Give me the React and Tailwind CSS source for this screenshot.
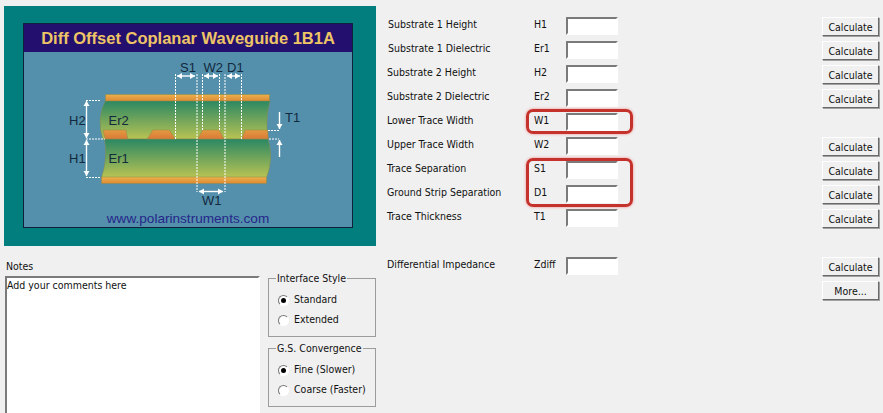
const rows = [
  { label: "Substrate 1 Height", sym: "H1", calc: true, indent: true },
  { label: "Substrate 1 Dielectric", sym: "Er1", calc: true, indent: true },
  { label: "Substrate 2 Height", sym: "H2", calc: true },
  { label: "Substrate 2 Dielectric", sym: "Er2", calc: true },
  { label: "Lower Trace Width", sym: "W1", calc: false },
  { label: "Upper Trace Width", sym: "W2", calc: true },
  { label: "Trace Separation", sym: "S1", calc: true },
  { label: "Ground Strip Separation", sym: "D1", calc: true },
  { label: "Trace Thickness", sym: "T1", calc: true },
];

function Bevel({ children }) {
  return (
    <button className="block h-[19px] w-[57px] border border-t-white border-l-white border-r-[#6a6a6a] border-b-[#6a6a6a] bg-[#f0f0f0] text-center text-[10.5px] leading-[16px] text-[#111] shadow-[1px_1px_0_#a0a0a0]">
      {children}
    </button>
  );
}

function Field() {
  return (
    <input
      type="text"
      className="h-[18px] w-[52px] shrink-0 border-2 border-t-[#7a7a7a] border-l-[#7a7a7a] border-r-white border-b-white bg-white outline-none"
    />
  );
}

function Row({ label, sym, calc, indent }) {
  return (
    <div className="flex h-6 items-start">
      <span className={`${indent ? "ml-px w-[146px]" : "w-[147px]"} pt-px text-[10.5px] leading-[13px]`}>{label}</span>
      <span className="w-[32px] pt-px text-[10.5px] leading-[13px]">{sym}</span>
      <Field />
      <div className="ml-auto">{calc && <Bevel>Calculate</Bevel>}</div>
    </div>
  );
}

function Radio({ label, checked }) {
  return (
    <div className="flex h-5 items-center">
      <span className="flex size-[11px] items-center justify-center rounded-full border border-t-[#777] border-l-[#777] border-r-white border-b-white bg-white">
        {checked && <span className="size-[5px] rounded-full bg-black" />}
      </span>
      <span className="ml-[5px] text-[10.5px]">{label}</span>
    </div>
  );
}

function Group({ title, options }) {
  return (
    <fieldset className="h-[65px] border border-[#9c9c9c] pl-[9px] pt-[5px]">
      <legend className="-ml-[2px] whitespace-nowrap px-px text-[10.5px] leading-[13px]">{title}</legend>
      {options.map((o) => (
        <Radio key={o.label} {...o} />
      ))}
    </fieldset>
  );
}

function Arrow({ x1, y1, x2, y2, both }) {
  // small arrow heads drawn by hand, the diagram is a picture
  const dx = Math.sign(x2 - x1);
  const dy = Math.sign(y2 - y1);
  const head = (x, y, sx, sy) =>
    `${x},${y} ${x - sx * 5 - sy * 3},${y - sy * 5 - sx * 3} ${x - sx * 5 + sy * 3},${y - sy * 5 + sx * 3}`;
  return (
    <g fill="#fff" stroke="none">
      <line x1={x1} y1={y1} x2={x2} y2={y2} stroke="#fff" strokeWidth="1.4" />
      <polygon points={head(x2, y2, dx, dy)} />
      {both && <polygon points={head(x1, y1, -dx, -dy)} />}
    </g>
  );
}

function Dash({ x1, y1, x2, y2 }) {
  return <line x1={x1} y1={y1} x2={x2} y2={y2} stroke="#fff" strokeWidth="1" strokeDasharray="2 1" />;
}

// svg viewBox is in page coordinates so the numbers read off the reference directly
function Diagram() {
  const lab = { fill: "#13293d", fontSize: 13, fontFamily: "'Liberation Sans', sans-serif" };
  const edge = { stroke: "#8a8a4a", strokeWidth: 0.5 };
  return (
    <svg width="328" height="158" viewBox="24 52 328 158" className="block">
      <defs>
        <linearGradient id="green" x1="0" y1="0" x2="0" y2="1">
          <stop offset="0" stopColor="#2a8763" />
          <stop offset="1" stopColor="#b8c353" />
        </linearGradient>
        <linearGradient id="copper" x1="0" y1="0" x2="0" y2="1">
          <stop offset="0" stopColor="#ecb04a" />
          <stop offset="1" stopColor="#dd8a35" />
        </linearGradient>
        <linearGradient id="trace" x1="0" y1="0" x2="0" y2="1">
          <stop offset="0" stopColor="#e49a40" />
          <stop offset="1" stopColor="#d97a38" />
        </linearGradient>
      </defs>
      <path d="M105.5 100.5 Q96 119 103 139 L268 139 Q265 119 270 100.5 Z" fill="url(#green)" {...edge} />
      <path d="M104.5 139 Q108 158 101.5 177.5 L266.5 177.5 Q274 158 268 139 Z" fill="url(#green)" {...edge} />
      <rect x="105.5" y="94.5" width="164" height="6.5" fill="url(#copper)" {...edge} />
      <rect x="101.5" y="177" width="165" height="6.5" fill="url(#copper)" {...edge} />
      <polygon points="103,130 126,130 127.7,139 105,139" fill="url(#trace)" {...edge} />
      <polygon points="147.3,139 152.7,130 169.3,130 175.3,139" fill="url(#trace)" {...edge} />
      <polygon points="197.7,139 202.7,130 219.3,130 224,139" fill="url(#trace)" {...edge} />
      <polygon points="241.7,139 245,130 267.7,130 268.3,139" fill="url(#trace)" {...edge} />

      <Dash x1="175.5" y1="74" x2="175.5" y2="139" />
      <Dash x1="197" y1="74" x2="197" y2="192" />
      <Dash x1="202.5" y1="74" x2="202.5" y2="130" />
      <Dash x1="219.5" y1="74" x2="219.5" y2="130" />
      <Dash x1="225" y1="74" x2="225" y2="192" />
      <Dash x1="241.5" y1="74" x2="241.5" y2="139" />
      <Dash x1="86" y1="100.5" x2="101" y2="100.5" />
      <Dash x1="86" y1="139" x2="105" y2="139" />
      <Dash x1="86" y1="177.5" x2="101" y2="177.5" />
      <Dash x1="268" y1="130.5" x2="279" y2="130.5" />
      <Dash x1="269" y1="139" x2="279" y2="139" />

      <Arrow x1={177} y1={76} x2={195} y2={76} both />
      <Arrow x1={204} y1={76} x2={218} y2={76} both />
      <Arrow x1={227} y1={76} x2={240} y2={76} both />
      <Arrow x1={199} y1={191.5} x2={223} y2={191.5} both />
      <Arrow x1={86.5} y1={101} x2={86.5} y2={138} both />
      <Arrow x1={86.5} y1={140} x2={86.5} y2={176} both />
      <Arrow x1={279.5} y1={112} x2={279.5} y2={129} />
      <Arrow x1={279.5} y1={157} x2={279.5} y2={140} />

      <text x="180" y="72" {...lab}>S1</text>
      <text x="203.5" y="72" {...lab}>W2</text>
      <text x="227" y="72" {...lab}>D1</text>
      <text x="202" y="205" {...lab}>W1</text>
      <text x="69" y="125" {...lab}>H2</text>
      <text x="69" y="163" {...lab}>H1</text>
      <text x="108.5" y="125" {...lab}>Er2</text>
      <text x="108.5" y="163" {...lab}>Er1</text>
      <text x="285" y="122" {...lab}>T1</text>
    </svg>
  );
}

export default function App() {
  return (
    <div className="flex h-[413px] w-[883px] overflow-hidden bg-[#f0f0f0] font-['DejaVu_Sans_Condensed','Liberation_Sans',sans-serif] text-[#111]">
      <div className="w-[387px] shrink-0 pl-1 pt-1.5">
        <div className="h-[240px] w-[372px] bg-[#017e7d] pl-[19px] pt-[17px] font-['Liberation_Sans',sans-serif]">
          <div className="h-[205px] w-[330px] border border-[#10203a] bg-[#5490ac]">
            <div className="flex h-[28px] items-center justify-center bg-[#230f6e] text-[16.5px] font-bold text-[#eec566]">
              Diff Offset Coplanar Waveguide 1B1A
            </div>
            <Diagram />
            <div className="text-center text-[13.6px] leading-[17px] text-[#25268a]">www.polarinstruments.com</div>
          </div>
        </div>
        <div className="flex">
          <div className="w-[264px] shrink-0 pl-px">
            <div className="pl-px pt-[14px] pb-[3px] text-[10.5px] leading-[13px]">Notes</div>
            <div className="h-[150px] w-[255px] border-2 border-t-[#7a7a7a] border-l-[#7a7a7a] border-r-white bg-white pt-px text-[10.5px] leading-[13px]">
              Add your comments here
            </div>
          </div>
          <div className="flex w-[108px] flex-col gap-[5px] pt-[26px]">
            <Group title="Interface Style" options={[{ label: "Standard", checked: true }, { label: "Extended" }]} />
            <Group title="G.S. Convergence" options={[{ label: "Fine (Slower)", checked: true }, { label: "Coarse (Faster)" }]} />
          </div>
        </div>
      </div>

      <div className="relative w-[492px] pt-[17px]">
        {rows.map((r) => (
          <Row key={r.sym} {...r} />
        ))}
        <div className="h-6" />
        <Row label="Differential Impedance" sym="Zdiff" calc />
        <div className="flex justify-end">
          <Bevel>More...</Bevel>
        </div>
        <div className="absolute left-[139px] top-[109px] h-[25px] w-[107px] rounded-[7px] border-[3px] border-[#c5322b] shadow-[0_0_3px_#e88]" />
        <div className="absolute left-[139px] top-[158px] h-[49px] w-[107px] rounded-[7px] border-[3px] border-[#c5322b] shadow-[0_0_3px_#e88]" />
      </div>
    </div>
  );
}
